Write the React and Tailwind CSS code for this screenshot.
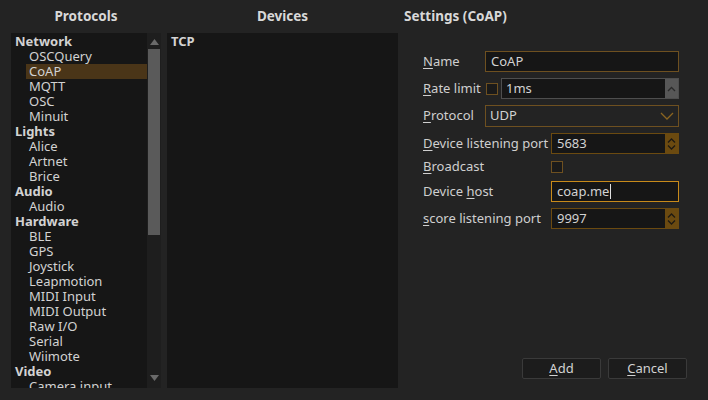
import React from 'react';

const protocols = [
  { name: 'Network', cat: true },
  { name: 'OSCQuery' },
  { name: 'CoAP', selected: true },
  { name: 'MQTT' },
  { name: 'OSC' },
  { name: 'Minuit' },
  { name: 'Lights', cat: true },
  { name: 'Alice' },
  { name: 'Artnet' },
  { name: 'Brice' },
  { name: 'Audio', cat: true },
  { name: 'Audio' },
  { name: 'Hardware', cat: true },
  { name: 'BLE' },
  { name: 'GPS' },
  { name: 'Joystick' },
  { name: 'Leapmotion' },
  { name: 'MIDI Input' },
  { name: 'MIDI Output' },
  { name: 'Raw I/O' },
  { name: 'Serial' },
  { name: 'Wiimote' },
  { name: 'Video', cat: true },
  { name: 'Camera input' },
];

// libellé avec la lettre de raccourci soulignée
const Label = ({ pre = '', u, post = '' }) => (
  <span className="text-[#cfcfcf] whitespace-nowrap">
    {pre}
    <u className="underline-offset-2">{u}</u>
    {post}
  </span>
);

const SpinButtons = ({ double }) =>
  double ? (
    <div className="w-[13px] h-full bg-[#6b4a10] flex items-center justify-center">
      <svg width="9" height="14" viewBox="0 0 9 14">
        <path d="M1 5.5 L4.5 2 L8 5.5 M1 8.5 L4.5 12 L8 8.5" fill="none" stroke="#1e1a12" strokeWidth="1.3" />
      </svg>
    </div>
  ) : (
    <div className="w-[13px] h-full bg-[#575757] flex items-center justify-center">
      <svg width="9" height="8" viewBox="0 0 9 8">
        <path d="M1 6 L4.5 2.5 L8 6" fill="none" stroke="#2a2a2a" strokeWidth="1.3" />
      </svg>
    </div>
  );

const Checkbox = () => (
  <div className="w-[12px] h-[12px] border border-[#6e5020] bg-[#1a1a1a]" />
);

const App = () => {
  return (
    <div
      className="w-[708px] h-[400px] bg-[#232323] flex text-[13px] text-[#d2d2d2] overflow-hidden"
      style={{ fontFamily: '"Noto Sans", "Open Sans", sans-serif' }}
    >
      {/* Protocols */}
      <div className="ml-[11px] w-[150px] flex flex-col">
        <div className="h-[33px] flex items-center justify-center font-bold text-[13.5px] text-[#d8d8d8]">
          Protocols
        </div>
        <div className="h-[355px] bg-[#161616] flex">
          <div className="flex-1 pt-[1px] overflow-hidden">
            {protocols.map((p, i) => (
              <div
                key={i}
                className={
                  'h-[15px] leading-[15px] whitespace-nowrap ' +
                  (p.cat
                    ? 'pl-[4px] font-bold'
                    : p.selected
                    ? 'ml-[15px] pl-[3px] bg-[#4a3518]'
                    : 'pl-[18px]')
                }
              >
                {p.name}
              </div>
            ))}
          </div>
          <div className="w-[14px] bg-[#1e1e1e] flex flex-col items-center">
            <div className="h-[14px] flex items-center justify-center mt-[2px]">
              <svg width="9" height="6" viewBox="0 0 9 6">
                <path d="M0 6 L4.5 0 L9 6 Z" fill="#6a6a6a" />
              </svg>
            </div>
            <div className="w-[12px] h-[186px] bg-[#5a5a5a]" />
            <div className="flex-1" />
            <div className="h-[14px] flex items-center justify-center mb-[3px]">
              <svg width="9" height="6" viewBox="0 0 9 6">
                <path d="M0 0 L4.5 6 L9 0 Z" fill="#6a6a6a" />
              </svg>
            </div>
          </div>
        </div>
      </div>

      {/* Devices */}
      <div className="ml-[6px] w-[231px] flex flex-col">
        <div className="h-[33px] flex items-center justify-center font-bold text-[13.5px] text-[#d8d8d8]">
          Devices
        </div>
        <div className="h-[355px] bg-[#161616] pt-[1px] pl-[4px]">
          <div className="h-[15px] leading-[15px] font-bold">TCP</div>
        </div>
      </div>

      {/* Settings */}
      <div className="ml-[6px] flex-1 flex flex-col">
        <div className="h-[33px] flex items-center font-bold text-[13.5px] text-[#d8d8d8]">
          Settings (CoAP)
        </div>
        <div className="pl-[19px] pr-[29px] pt-[18px] flex flex-col">
          <div className="flex items-center h-[21px]">
            <div className="w-[62px]"><Label u="N" post="ame" /></div>
            <div className="flex-1 h-full border border-[#6e5020] bg-[#161616] pl-[5px] flex items-center">CoAP</div>
          </div>
          <div className="flex items-center h-[21px] mt-[6px]">
            <div className="w-[63px]"><Label u="R" post="ate limit" /></div>
            <Checkbox />
            <div className="ml-[3px] flex-1 h-full border border-[#4e4e4e] bg-[#161616] flex items-center">
              <span className="flex-1 pl-[4px]">1ms</span>
              <SpinButtons />
            </div>
          </div>
          <div className="flex items-center h-[22px] mt-[6px]">
            <div className="w-[62px]"><Label u="P" post="rotocol" /></div>
            <div className="flex-1 h-full border border-[#6e5020] bg-[#232323] pl-[4px] pr-[4px] flex items-center justify-between">
              <span>UDP</span>
              <svg width="14" height="8" viewBox="0 0 14 8">
                <path d="M1 1 L7 7 L13 1" fill="none" stroke="#8a6420" strokeWidth="1.3" />
              </svg>
            </div>
          </div>
          <div className="flex items-center h-[21px] mt-[6px]">
            <div className="w-[128px]"><Label u="D" post="evice listening port" /></div>
            <div className="flex-1 h-full border border-[#6b4a10] bg-[#161616] flex items-center">
              <span className="flex-1 pl-[5px]">5683</span>
              <SpinButtons double />
            </div>
          </div>
          <div className="flex items-center h-[21px] mt-[2px]">
            <div className="w-[128px]"><Label u="B" post="roadcast" /></div>
            <Checkbox />
          </div>
          <div className="flex items-center h-[21px] mt-[4px]">
            <div className="w-[128px]"><Label pre="Device " u="h" post="ost" /></div>
            <div className="flex-1 h-full border border-[#c88a1a] bg-[#161616] pl-[5px] flex items-center">
              coap.me<span className="inline-block w-[1px] h-[15px] bg-[#e0e0e0] ml-[1px]" />
            </div>
          </div>
          <div className="flex items-center h-[21px] mt-[6px]">
            <div className="w-[128px]"><Label u="s" post="core listening port" /></div>
            <div className="flex-1 h-full border border-[#6b4a10] bg-[#161616] flex items-center">
              <span className="flex-1 pl-[5px]">9997</span>
              <SpinButtons double />
            </div>
          </div>
        </div>
        <div className="flex-1" />
        <div className="flex justify-end gap-[7px] pr-[21px] pb-[21px]">
          <button className="w-[79px] h-[21px] bg-[#1c1c1c] border border-[#3a3a3a] rounded-[2px] text-[#d2d2d2]">
            <u className="underline-offset-2">A</u>dd
          </button>
          <button className="w-[79px] h-[21px] bg-[#1c1c1c] border border-[#3a3a3a] rounded-[2px] text-[#d2d2d2]">
            <u className="underline-offset-2">C</u>ancel
          </button>
        </div>
      </div>
    </div>
  );
};

export default App;
